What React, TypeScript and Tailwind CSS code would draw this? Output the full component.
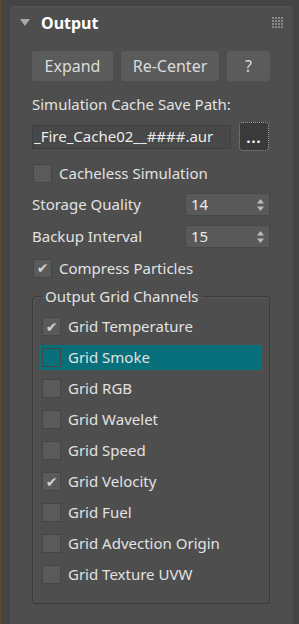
import React from "react";

const Check: React.FC<{ checked?: boolean; className?: string }> = ({ checked, className }) => (
  <span
    className={
      "flex h-[19px] w-[19px] shrink-0 items-center justify-center border border-[#454545] " +
      (className ?? "bg-[#5a5a5a]")
    }
  >
    {checked && (
      <span className="font-['DejaVu_Sans',sans-serif] text-[14px] leading-none text-[#d0d0d0]">✔</span>
    )}
  </span>
);

const Spinner: React.FC<{ value: string }> = ({ value }) => (
  <div className="flex h-[23px] w-[85px] items-center justify-between rounded-[2px] border border-[#474747] bg-[#595959] pl-[5px] pr-[4px] text-[15px] text-[#ececec]">
    <span>{value}</span>
    <svg width="9" height="14" viewBox="0 0 9 14">
      <path d="M4.5 1 L8 5.5 L1 5.5 Z" fill="#bdbdbd" />
      <path d="M4.5 13 L8 8.5 L1 8.5 Z" fill="#bdbdbd" />
    </svg>
  </div>
);

const channels = [
  { name: "Grid Temperature", checked: true },
  { name: "Grid Smoke", checked: false, selected: true },
  { name: "Grid RGB", checked: false },
  { name: "Grid Wavelet", checked: false },
  { name: "Grid Speed", checked: false },
  { name: "Grid Velocity", checked: true },
  { name: "Grid Fuel", checked: false },
  { name: "Grid Advection Origin", checked: false },
  { name: "Grid Texture UVW", checked: false },
];

const App: React.FC = () => {
  return (
    <div className="flex min-h-[624px] w-[299px] overflow-hidden bg-[#444444] font-['Noto_Sans',sans-serif] text-[15px] text-[#e2e2e2]">
      <div className="w-[1px] bg-[#5e4c2c]" />
      <div className="ml-[9px] mt-[6px] w-[283px] rounded-t-[4px] border-t border-[#555] bg-[#4e4e4e] pl-[22px] pr-[23px]">
        {/* header */}
        <div className="-ml-[12px] flex h-[31px] items-center">
          <svg width="10" height="8" viewBox="0 0 10 8">
            <path d="M0 0 L10 0 L5 7 Z" fill="#a8a8a8" />
          </svg>
          <span className="ml-[11px] text-[16px] font-bold leading-none text-white">Output</span>
          <div className="ml-auto mr-[-13px] grid grid-cols-4 gap-[1px]">
            {Array.from({ length: 16 }).map((_, i) => (
              <span key={i} className="h-[2px] w-[2px] bg-[#8a8a8a]" />
            ))}
          </div>
        </div>

        {/* buttons */}
        <div className="mt-[13px] flex h-[30px] gap-[8px]">
          <button className="w-[81px] rounded-[3px] bg-[#5b5b5b] text-[16px] text-[#dcdcdc]">Expand</button>
          <button className="w-[98px] rounded-[3px] bg-[#5b5b5b] text-[16px] text-[#dcdcdc]">Re-Center</button>
          <button className="w-[43px] rounded-[3px] bg-[#5b5b5b] text-[16px] text-[#dcdcdc]">?</button>
        </div>

        <div className="mt-[13px] h-[20px] leading-[20px]">Simulation Cache Save Path:</div>

        <div className="mt-[8px] flex h-[29px] items-center">
          <div className="flex h-[24px] w-[199px] items-center overflow-hidden border border-[#3e3e3e] bg-[#484848] pl-[1px] text-[15px] whitespace-nowrap text-[#ececec]">
            _Fire_Cache02__####.aur
          </div>
          <button className="ml-[8px] flex h-[29px] w-[30px] items-end justify-center rounded-[4px] border border-dotted border-[#9a9a9a] bg-[#3a3a3a] pb-[5px]">
            <span className="text-[14px] leading-none font-bold tracking-[1px] text-white">...</span>
          </button>
        </div>

        <div className="mt-[12px] flex h-[20px] items-center pl-[1px]">
          <Check />
          <span className="ml-[7px]">Cacheless Simulation</span>
        </div>

        <div className="mt-[10px] flex items-center justify-between">
          <span>Storage Quality</span>
          <Spinner value="14" />
        </div>
        <div className="mt-[9px] flex items-center justify-between">
          <span>Backup Interval</span>
          <Spinner value="15" />
        </div>

        <div className="mt-[10px] flex h-[20px] items-center pl-[1px]">
          <Check checked />
          <span className="ml-[7px]">Compress Particles</span>
        </div>

        <fieldset className="mt-[9px] rounded-[3px] border border-[#3a3a3a] px-[7px] pt-[9px] pb-[16px] shadow-[inset_1px_1px_0_#575757]">
          <legend className="ml-[2px] px-[3px] leading-[18px]">Output Grid Channels</legend>
          <div className="flex flex-col gap-[6px]">
            {channels.map((c) => (
              <div
                key={c.name}
                className={
                  "flex h-[25px] items-center pl-[2px] " + (c.selected ? "bg-[#08707a]" : "")
                }
              >
                <Check
                  checked={c.checked}
                  className={c.selected ? "bg-[#08707a] border-[#0b4b51]" : "bg-[#5a5a5a]"}
                />
                <span className="ml-[7px]">{c.name}</span>
              </div>
            ))}
          </div>
        </fieldset>
      </div>
    </div>
  );
};

export default App;
